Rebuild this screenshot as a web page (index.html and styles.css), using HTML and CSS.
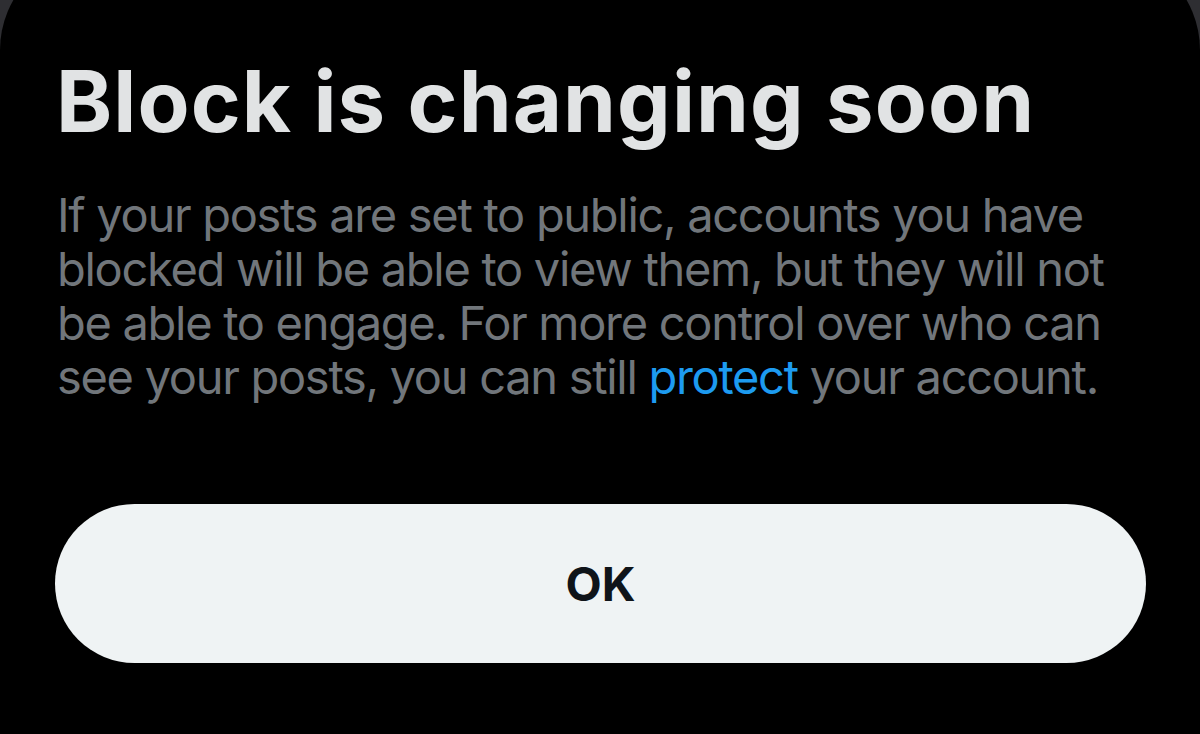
FILE: index.html
```html
<!DOCTYPE html>
<html lang="en">
<head>
<meta charset="utf-8">
<title>Block is changing soon</title>
<link rel="stylesheet" href="styles.css">
</head>
<body>
<div class="sheet">
  <h1 class="title">Block is changing soon</h1>
  <p class="desc">If your posts are set to public, accounts you have<br>blocked will be able to view them, but they will not<br>be able to engage. For more control over who can<br>see your posts, you can still <a class="link" href="#">protect</a> your account.</p>
  <button class="ok" type="button">OK</button>
</div>
</body>
</html>
```

FILE: styles.css
```css
html, body {
  margin: 0;
  padding: 0;
}
body {
  background: #2e2e32;
  width: 1200px;
  height: 734px;
  overflow: hidden;
  font-family: Inter, "Noto Sans", "Liberation Sans", sans-serif;
}
.sheet {
  margin-top: -50px;
  height: 784px;
  background: #000;
  border-radius: 100px 100px 0 0;
  padding: 101px 0 0 0;
  box-sizing: border-box;
  display: flex;
  flex-direction: column;
  align-items: flex-start;
}
.title {
  margin: 0 0 0 56px;
  font-size: 85px;
  line-height: 102px;
  font-weight: 700;
  color: #e1e3e4;
  letter-spacing: 1.1px;
  white-space: nowrap;
}
.desc {
  margin: 35px 0 0 57px;
  font-size: 47px;
  line-height: 54px;
  font-weight: 400;
  color: #71767b;
  letter-spacing: -1.3px;
  white-space: nowrap;
}
.link {
  color: #1d9bf0;
  text-decoration: none;
}
.ok {
  margin: 100px 0 0 55px;
  width: 1091px;
  height: 159px;
  border: none;
  border-radius: 80px;
  background: #eff3f4;
  color: #0f1419;
  font-family: inherit;
  font-size: 47px;
  font-weight: 700;
  padding: 0;
}
```
